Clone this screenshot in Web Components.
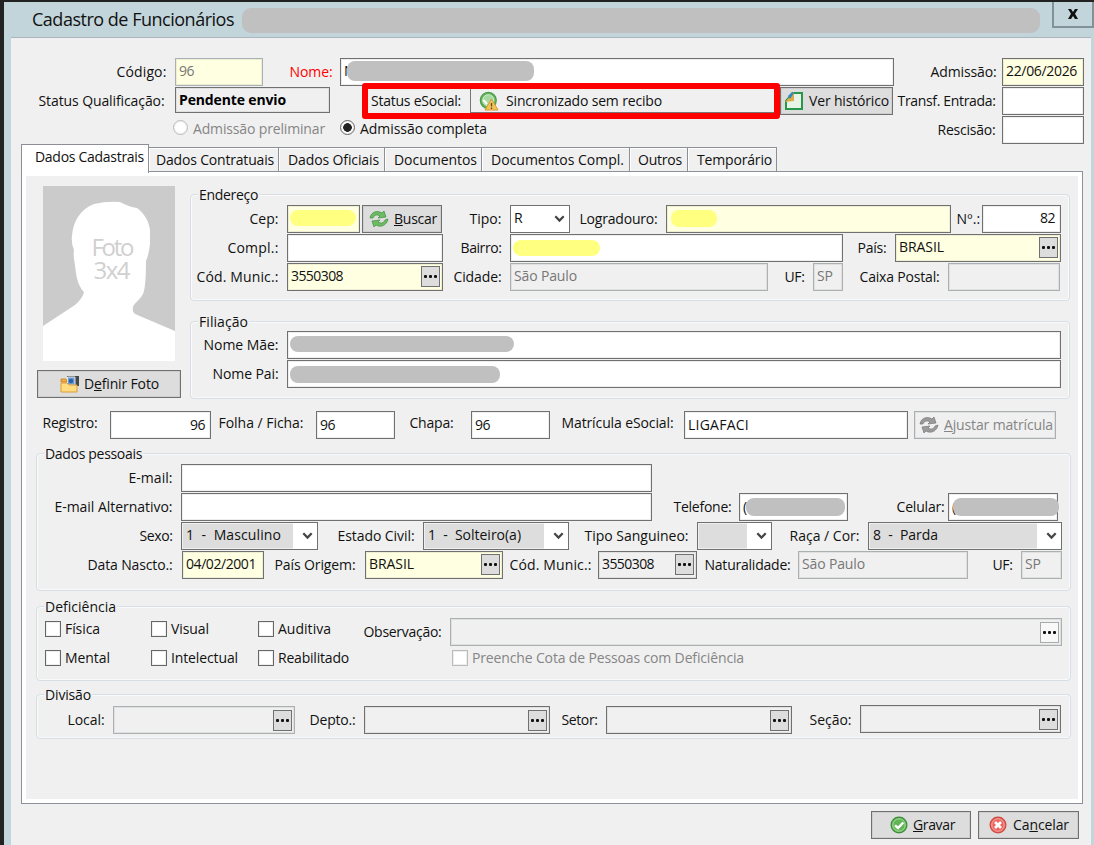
<!DOCTYPE html>
<html lang="pt-BR">
<head>
<meta charset="utf-8">
<title>Cadastro de Funcionários</title>
<style>
  body {
    margin: 0;
    width: 1094px;
    height: 845px;
    overflow: hidden;
    background: #222;
    color: #111;
    font: 14px/20px "Open Sans", "Noto Sans", sans-serif;
  }
</style>
</head>
<body>
<employee-form></employee-form>

<script>
const ICONS = {
    sync: `<svg viewBox="0 0 20 20"><g stroke="var(--edge)" stroke-width=".7" fill="var(--fill)"><path d="M1 9C2 3 8 1 13 4L15 2 17 8 9 9 11 7C8 5 5 6 4 9Z"/><path d="M19 10C18 16 12 19 7 16L5 18 3 12 11 11 9 13C12 15 15 14 16 11Z"/></g></svg>`,
    ok: `<svg viewBox="0 0 20 20"><circle cx="10" cy="10" r="7.9" fill="#62b557" stroke="#398b39" stroke-width="1.2"/><circle cx="10" cy="10" r="6.2" fill="none" stroke="#a6dd9b"/><path d="M6 10.3 9 13 14.3 7.5" fill="none" stroke="#fff" stroke-width="2.4"/></svg>`,
    cancel: `<svg viewBox="0 0 20 20"><circle cx="10" cy="10" r="7.9" fill="#e9655d" stroke="#cc4a43" stroke-width="1.2"/><circle cx="10" cy="10" r="6.2" fill="none" stroke="#f7aaa4"/><path d="M7 7 13 13M13 7 7 13" stroke="#fff" stroke-width="2.8"/></svg>`,
    warn: `<svg viewBox="0 0 20 20"><circle cx="9.3" cy="9.3" r="8" fill="#65b65d" stroke="#4c9c49" stroke-width="1.2"/><circle cx="9.3" cy="9.3" r="5.6" fill="#a8d9a2" stroke="#d5efd1"/><path d="M4.5 9 8 13" stroke="#fff" stroke-width="2"/><path d="M12.5 8 19 19H6Z" fill="#f3c45b" stroke="#d79b35"/><path d="M12.5 12V15.4M12.5 16.5V18" stroke="#664717" stroke-width="1.3"/></svg>`,
    page: `<svg viewBox="0 0 20 20"><path d="M9 2H18V18H2V10Z" fill="#e9f4e9" stroke="#279749" stroke-width="2"/><path d="M1 11 10 1V10Z" fill="#e0ab46"/><path d="M4 5 8 1 10 2 6 8Z" fill="#3389bd"/></svg>`,
    photo: `<svg viewBox="0 0 20 20"><path d="M7 2H19V12H7Z" fill="#45484b"/><path d="M7.5 3H15V11H7.5Z" fill="#6f9ed4" stroke="#e6e6e6"/><circle cx="11" cy="7" r="2.3" fill="#2864a8"/><path d="M1 5H6L7 8H1Z" fill="#edac48" stroke="#ce8a2b"/><path d="M1 9H7L9 11H17V18H1Z" fill="#ffdc80" stroke="#dc9d39"/></svg>`
};

// Text set to a given width through its letter spacing
class FitText extends HTMLElement {
    connectedCallback() {
        this.attachShadow({ mode: 'open' }).innerHTML =
            '<style>:host { display: inline-block; white-space: pre; font-stretch: 90%; }</style><slot></slot>';
        const width = Number(this.getAttribute('width'));
        if (!width) return;
        const count = this.textContent.length;
        const natural = this.getBoundingClientRect().width;
        this.style.letterSpacing = `${(width - natural) / count}px`;
    }
}
customElements.define('fit-text', FitText);

class AppIcon extends HTMLElement {
    connectedCallback() {
        this.attachShadow({ mode: 'open' }).innerHTML = `
          <style>
            :host { display: block; flex: none; width: 20px; height: 20px; --fill: #6dbb63; --edge: #3f8e3f; }
            :host([muted]) { --fill: #9b9b9b; --edge: #777; }
            svg { display: block; }
          </style>
          ${ICONS[this.getAttribute('name')]}
        `;
    }
}
customElements.define('app-icon', AppIcon);

// Label and input box. "span" runs from the previous item to the box.
class FormField extends HTMLElement {
    attr(name, fallback = '') {
        return this.getAttribute(name) ?? fallback;
    }

    connectedCallback() {
        const bar = this.attr('bar').split(' ');
        this.attachShadow({ mode: 'open' }).innerHTML = `
          <style>
            :host { display: flex; flex: none; }
            .label {
              box-sizing: border-box;
              width: ${this.attr('span', 0)}px;
              padding: ${this.attr('drop', 4)}px ${this.attr('gap', 9) - 0.5}px 0 0;
              display: flex;
              justify-content: flex-end;
              white-space: nowrap;
              color: ${this.attr('ink', 'inherit')};
            }
            .box {
              box-sizing: border-box;
              width: ${this.attr('width')}px;
              height: ${this.attr('height', 28)}px;
              padding: ${this.attr('rise', 3)}px 4px 0 3px;
              border: 1px solid #707070;
              box-shadow: inset 0 0 0 1px #0001;
              background: #fff;
              display: flex;
              position: relative;
            }
            :host([tone=cream]) .box, :host([tone=locked]) .box { background: #ffffe1; }
            :host([tone=gray]) .box, :host([tone=off]) .box { background: #f0f0f0; }
            :host([tone=off]) .box, :host([tone=locked]) .box { border-color: #abb0b3; color: #777; }
            :host([end]) .box { justify-content: flex-end; padding-right: 5px; }
            :host([bold]) .box { font-weight: bold; color: #000; }
            :host([combo]) .box { background: linear-gradient(90deg, #ddd calc(100% - 24px), #fff 0); box-shadow: inset 0 0 0 1px #fff8; padding-left: 4px; }
            :host([combo=plain]) .box { background: #fff; padding-left: 3px; }
            .more {
              box-sizing: border-box;
              width: 19px;
              height: 21px;
              margin: 0 -2px 0 auto;
              border: 1px solid #707070;
              background: #ddd;
              display: flex;
              align-items: center;
              justify-content: center;
              gap: 2px;
            }
            :host([more=light]) .more { background: #f8f8f8; border-color: #aaa; }
            .more i { width: 3px; height: 3px; background: #111; border-radius: 1px; }
            .arrow { width: 11px; height: 8px; margin: 7px 0 0 auto; }
            .bar {
              position: absolute;
              left: ${bar[0]}px;
              width: ${bar[1]}px;
              top: ${bar[2]}px;
              height: ${bar[3]}px;
              border-radius: 8px;
              background: ${bar[4] || '#c0c0c0'};
            }
          </style>
          <div class="label"><fit-text width="${this.attr('fit')}">${this.attr('label')}</fit-text></div>
          <div class="box">
            ${this.hasAttribute('value') ? `<fit-text width="${this.attr('vfit')}">${this.attr('value')}</fit-text>` : ''}
            ${this.hasAttribute('more') ? '<div class="more"><i></i><i></i><i></i></div>' : ''}
            ${this.hasAttribute('combo') ? '<svg class="arrow" viewBox="0 0 11 8"><path d="M1.3 1.2 5.5 5.6 9.7 1.2" fill="none" stroke="#444" stroke-width="2.2"/></svg>' : ''}
            ${this.hasAttribute('bar') ? '<div class="bar"></div>' : ''}
          </div>
        `;
    }
}
customElements.define('form-field', FormField);

class PushButton extends HTMLElement {
    connectedCallback() {
        const muted = this.hasAttribute('off') ? 'muted' : '';
        this.attachShadow({ mode: 'open' }).innerHTML = `
          <style>
            :host {
              box-sizing: border-box;
              display: flex;
              flex: none;
              align-items: center;
              gap: ${this.getAttribute('gap') || 5}px;
              width: ${this.getAttribute('width')}px;
              height: 28px;
              padding-left: ${this.getAttribute('pad')}px;
              border: 1px solid #707070;
              box-shadow: inset 0 0 0 1px #0001;
              background: #ddd;
              white-space: nowrap;
            }
            :host([off]) { background: #f0f0f0; border-color: #aaafb2; color: #858585; }
          </style>
          <app-icon name="${this.getAttribute('icon')}" ${muted}></app-icon>
          <slot></slot>
        `;
    }
}
customElements.define('push-button', PushButton);

class CheckOption extends HTMLElement {
    connectedCallback() {
        this.attachShadow({ mode: 'open' }).innerHTML = `
          <style>
            :host { display: flex; flex: none; align-items: center; height: 22px; white-space: nowrap; }
            i { box-sizing: border-box; width: 16px; height: 16px; margin-right: 4px; border: 1px solid #666; box-shadow: inset 0 0 0 1px #0001; background: #fff; }
            :host([off]) { color: #858585; }
            :host([off]) i { border-color: #bbb; }
            :host([radio]) i { width: 15px; height: 15px; margin-right: 5px; border-radius: 50%; }
            :host([radio]) slot { display: block; padding-top: 3px; }
            :host([on]) i { background: radial-gradient(circle, #222 0 4px, #fff 4.6px); }
          </style>
          <i></i><slot></slot>
        `;
    }
}
customElements.define('check-option', CheckOption);

class GroupBox extends HTMLElement {
    connectedCallback() {
        this.attachShadow({ mode: 'open' }).innerHTML = `
          <style>
            :host {
              box-sizing: border-box;
              display: flex;
              flex-direction: column;
              flex: none;
              height: ${this.getAttribute('height')}px;
              border: 1px solid #d5dfe5;
              border-radius: 4px;
              box-shadow: inset 0 0 0 1px #fafafa;
            }
            .legend { align-self: flex-start; height: 18px; line-height: 20px; margin: -10px 0 0 7px; background: #f0f0f0; padding: 0 1px; }
            .rows { display: flex; flex-direction: column; gap: 1px; padding-top: ${this.getAttribute('pad') || 2}px; }
          </style>
          <div class="legend"><fit-text width="${this.getAttribute('fit')}">${this.getAttribute('legend')}</fit-text></div>
          <div class="rows"><slot></slot></div>
        `;
    }
}
customElements.define('group-box', GroupBox);

class PhotoBox extends HTMLElement {
    connectedCallback() {
        this.attachShadow({ mode: 'open' }).innerHTML = `
          <style>
            :host { display: block; width: 132px; height: 175px; background: #cbcbcb; }
            svg { display: block; }
            text { fill: #d0d0d0; font-size: 24px; text-anchor: middle; }
          </style>
          <svg width="132" height="175" viewBox="0 0 132 175">
            <path fill="#fff" d="M0 140 32 119Q40 112 41 106C34 99 33 88 32 79Q30 70 31 64 28 57 29 50C30 36 37 23 51 18Q64 15 77 16 86 21 94 22C102 28 106 36 107 44V58Q106 68 103 75 103 101 100 108C97 114 91 117 90 121Q89 126 92 128L132 145V175H0Z"/>
            <text x="70" y="70" textLength="43">Foto</text>
            <text x="69" y="93" textLength="37">3x4</text>
          </svg>
        `;
    }
}
customElements.define('photo-box', PhotoBox);

class TabStrip extends HTMLElement {
    connectedCallback() {
        // title, tab width, text width, left padding
        const tabs = [
            ['Dados Cadastrais', 128, 109, 13],
            ['Dados Contratuais', 130, 118, 7],
            ['Dados Oficiais', 106, 91, 9],
            ['Documentos', 97, 83, 9],
            ['Documentos Compl.', 148, 133, 9],
            ['Outros', 58, 44, 8],
            ['Temporário', 89, 75, 9]
        ];
        this.attachShadow({ mode: 'open' }).innerHTML = `
          <style>
            :host { display: flex; align-items: flex-start; height: 26px; }
            div {
              box-sizing: border-box;
              flex: none;
              height: 25px;
              margin-top: 2px;
              padding-top: 2px;
              border: 1px solid #8c8f98;
              border-left-width: 0;
              box-shadow: inset 1px 1px #fff;
            }
            div:first-of-type {
              height: 29px;
              margin-top: -1px;
              border-left-width: 1px;
              border-bottom: 0;
              background: #fff;
              position: relative;
            }
          </style>
          ${tabs.map(([title, width, fit, pad]) => `
            <div style="width: ${width}px; padding-left: ${pad}px"><fit-text width="${fit}">${title}</fit-text></div>
          `).join('')}
        `;
    }
}
customElements.define('tab-strip', TabStrip);

class EmployeeForm extends HTMLElement {
    connectedCallback() {
        this.attachShadow({ mode: 'open' }).innerHTML = `
          <style>
            :host { display: flex; flex-direction: column; box-sizing: border-box; height: 845px; margin-left: 4px; padding: 2px 3px 0 7px; background: #c2d5db; border-top: 0; box-shadow: inset 0 2px #222; }
            .title { display: flex; height: 35px; flex: none; }
            .title fit-text { margin: 4px 8px 0 21px; font-size: 18px; line-height: 26px; }
            .title .name { width: 798px; height: 25px; margin-top: 6px; border-radius: 9px; background: #c0c0c0; }
            .title .close { box-sizing: border-box; width: 42px; height: 26px; margin: 0 -3px 0 12px; border: 2px solid #83929a; border-top: 0; display: flex; align-items: center; justify-content: center; }
            main { flex: 1; display: flex; flex-direction: column; border-top: 1px solid #a9b6c0; background: #f0f0f0; }
            .row { display: flex; align-items: flex-start; flex: none; height: 28px; }
            .head { display: flex; flex-direction: column; gap: 1px; padding-top: 20px; height: 87px; }
            .status { box-sizing: border-box; width: 418px; height: 36px; margin: -4px 0 0 32px; border: 6px solid #f00; border-radius: 3px; display: flex; align-items: flex-start; position: relative; }
            .status .label { margin: 1px 8px 0 3px; width: 91px; padding-top: 1px; height: 20px; }
            .status .value { box-sizing: border-box; width: 304px; height: 24px; border: 1px solid #777; border-width: 0 0 1px 1px; display: flex; align-items: center; gap: 7px; padding-left: 8px; }
            .tabs { margin-left: 10px; }
            .panel { box-sizing: border-box; width: 1062px; height: 633px; margin-left: 10px; border: 1px solid #8c919c; box-shadow: inset 0 0 0 4px #fff; padding: 4px; flex: none; }
            .top { display: flex; }
            .photo { width: 164px; padding: 10px 0 0 11px; box-sizing: border-box; }
            .photo photo-box { margin: 0 0 9px 6px; }
            .groups { width: 880px; padding-top: 18px; display: flex; flex-direction: column; gap: 20px; }
            .record { padding-top: 12px; }
            .wide { width: 1035px; margin-left: 10px; }
            .actions { display: flex; gap: 7px; padding: 7px 0 0 860px; }
          </style>

          <div class="title">
            <fit-text width="202">Cadastro de Funcionários</fit-text>
            <div class="name"></div>
            <div class="close"><svg width="12" height="12" viewBox="0 0 12 12"><path d="M1 1H4L6 4 8 1H11L8 5.8 11 11H8L6 8 4 11H1L4 5.8Z" fill="#111"/></svg></div>
          </div>
          <main>
            <div class="head">
              <div class="row">
                <form-field label="Código:" fit="50" span="164" width="88" tone="locked" value="96" vfit="15" rise="2"></form-field>
                <form-field label="Nome:" fit="43" span="77" gap="8" ink="#f00" width="554" rise="2" value="N" bar="6 187 2 20"></form-field>
                <form-field label="Admissão:" fit="66" span="108" gap="6" width="82" tone="cream" rise="2" value="22/06/2026" vfit="71"></form-field>
              </div>
              <div class="row">
                <form-field label="Status Qualificação:" fit="126" span="164" gap="11" width="155" height="26" rise="2" tone="gray" bold value="Pendente envio" vfit="107"></form-field>
                <div class="status">
                  <div class="label"><fit-text width="90">Status eSocial:</fit-text></div>
                  <div class="value"><app-icon name="warn"></app-icon><fit-text width="156">Sincronizado sem recibo</fit-text></div>
                </div>
                <push-button icon="page" width="113" pad="3"><fit-text width="80">Ver histórico</fit-text></push-button>
                <form-field label="Transf. Entrada:" fit="98" span="109" gap="7" width="82"></form-field>
              </div>
              <div class="row">
                <check-option radio off style="margin-left: 162px; width: 167px"><fit-text width="132">Admissão preliminar</fit-text></check-option>
                <check-option radio on style="width: 147px"><fit-text width="127">Admissão completa</fit-text></check-option>
                <form-field label="Rescisão:" fit="58" span="515" gap="7" width="82"></form-field>
              </div>
            </div>
            <tab-strip class="tabs"></tab-strip>
            <div class="panel">
              <div class="top">
                <div class="photo">
                  <photo-box></photo-box>
                  <push-button icon="photo" width="144" pad="22" gap="4"><fit-text width="75">D<u>e</u>finir Foto</fit-text></push-button>
                </div>
                <div class="groups">
                  <group-box legend="Endereço" fit="59" height="107">
                    <div class="row">
                      <form-field label="Cep:" fit="29" span="96" width="73" tone="cream" bar="2 66 4 16 #ffff80"></form-field>
                      <push-button icon="sync" width="80" pad="6" gap="5" style="margin-left: 2px"><fit-text width="43"><u>B</u>uscar</fit-text></push-button>
                      <form-field label="Tipo:" fit="32" span="68" width="60" combo="plain" rise="2" value="R" vfit="9"></form-field>
                      <form-field label="Logradouro:" fit="78" span="96" width="285" tone="cream" bar="4 46 4 17 #ffff80"></form-field>
                      <form-field label="Nº.:" fit="24" span="31" gap="2" width="79" end rise="2" value="82" vfit="15"></form-field>
                    </div>
                    <div class="row">
                      <form-field label="Compl.:" fit="51" span="96" width="156"></form-field>
                      <form-field label="Bairro:" fit="41" span="67" width="333" bar="2 87 5 16 #ffff80"></form-field>
                      <form-field label="País:" fit="29" span="52" width="166" tone="cream" more rise="2" value="BRASIL" vfit="45"></form-field>
                    </div>
                    <div class="row">
                      <form-field label="Cód. Munic.:" fit="82" span="96" width="156" tone="cream" more value="3550308" vfit="52" rise="2"></form-field>
                      <form-field label="Cidade:" fit="48" span="67" width="258" tone="off" value="São Paulo" vfit="63" rise="2"></form-field>
                      <form-field label="UF:" fit="20" span="45" width="30" tone="off" value="SP" vfit="16" rise="2"></form-field>
                      <form-field label="Caixa Postal:" fit="80" span="105" width="112" tone="off"></form-field>
                    </div>
                  </group-box>
                  <group-box legend="Filiação" fit="49" height="78" pad="1">
                    <div class="row"><form-field label="Nome Mãe:" fit="75" span="96" width="774" bar="2 224 4 16"></form-field></div>
                    <div class="row"><form-field label="Nome Pai:" fit="66" span="96" width="774" bar="2 210 5 17"></form-field></div>
                  </group-box>
                </div>
              </div>

              <div class="row record">
                <form-field label="Registro:" fit="55" span="84" gap="13" drop="2" width="101" end value="96" vfit="15"></form-field>
                <form-field label="Folha / Ficha:" fit="85" span="105" gap="13" drop="2" width="79" value="96" vfit="15"></form-field>
                <form-field label="Chapa:" fit="44" span="76" gap="18" drop="2" width="79" value="96" vfit="15"></form-field>
                <form-field label="Matrícula eSocial:" fit="112" span="134" gap="11" drop="2" width="224" value="LIGAFACI" vfit="61"></form-field>
                <push-button icon="sync" off width="142" pad="4" style="margin-left: 6px"><fit-text width="109"><u>A</u>justar matrícula</fit-text></push-button>
              </div>

              <group-box class="wide" legend="Dados pessoais" fit="97" height="138" style="margin-top: 14px">
                <div class="row"><form-field label="E-mail:" fit="44" span="144" width="471"></form-field></div>
                <div class="row">
                  <form-field label="E-mail Alternativo:" fit="118" span="144" width="471"></form-field>
                  <form-field label="Telefone:" fit="58" span="87" gap="8" width="109" value="(" bar="6 99 4 18"></form-field>
                  <form-field label="Celular:" fit="48" span="100" gap="4" width="110" value="(" bar="4 106 4 18"></form-field>
                </div>
                <div class="row">
                  <form-field label="Sexo:" fit="33" span="144" width="137" combo rise="2" value="1  -  Masculino" vfit="95"></form-field>
                  <form-field label="Estado Civil:" fit="77" span="105" width="146" combo rise="2" value="1  -  Solteiro(a)" vfit="93"></form-field>
                  <form-field label="Tipo Sanguineo:" fit="104" span="128" width="75" combo rise="2"></form-field>
                  <form-field label="Raça / Cor:" fit="70" span="96" width="194" combo rise="2" value="8  -  Parda" vfit="65"></form-field>
                </div>
                <div class="row">
                  <form-field label="Data Nascto.:" fit="85" span="145" gap="10" width="82" tone="cream" rise="2" value="04/02/2001" vfit="70"></form-field>
                  <form-field label="País Origem:" fit="81" span="101" gap="10" width="138" tone="cream" more rise="2" value="BRASIL" vfit="45"></form-field>
                  <form-field label="Cód. Munic.:" fit="82" span="95" gap="7" width="99" tone="gray" more rise="2" value="3550308" vfit="52"></form-field>
                  <form-field label="Naturalidade:" fit="86" span="101" gap="8" width="170" tone="off" rise="2" value="São Paulo" vfit="63"></form-field>
                  <form-field label="UF:" fit="20" span="53" width="41" tone="off" rise="2" value="SP" vfit="16"></form-field>
                </div>
              </group-box>

              <group-box class="wide" legend="Deficiência" fit="71" height="75" pad="3" style="margin-top: 15px">
                <div class="row">
                  <check-option style="margin-left: 8px; width: 106px"><fit-text width="35">Física</fit-text></check-option>
                  <check-option style="width: 107px"><fit-text width="38">Visual</fit-text></check-option>
                  <check-option style="width: 106px"><fit-text width="53">Auditiva</fit-text></check-option>
                  <form-field label="Observação:" fit="78" span="86" width="612" tone="off" more="light"></form-field>
                </div>
                <div class="row">
                  <check-option style="margin-left: 8px; width: 106px"><fit-text width="45">Mental</fit-text></check-option>
                  <check-option style="width: 107px"><fit-text width="67">Intelectual</fit-text></check-option>
                  <check-option style="width: 106px"><fit-text width="71">Reabilitado</fit-text></check-option>
                  <check-option off style="margin-left: 88px"><fit-text width="272">Preenche Cota de Pessoas com Deficiência</fit-text></check-option>
                </div>
              </group-box>

              <group-box class="wide" legend="Divisão" fit="46" height="45" pad="3" style="margin-top: 13px">
                <div class="row">
                  <form-field label="Local:" fit="37" span="76" width="182" tone="off" more></form-field>
                  <form-field label="Depto.:" fit="46" span="69" width="186" tone="gray" more></form-field>
                  <form-field label="Setor:" fit="36" span="56" width="186" tone="gray" more></form-field>
                  <form-field label="Seção:" fit="42" span="68" width="201" tone="gray" more style="margin-top: -1px" drop="5"></form-field>
                </div>
              </group-box>
            </div>
            <div class="actions">
              <push-button icon="ok" width="100" pad="17" gap="4"><fit-text width="42"><u>G</u>ravar</fit-text></push-button>
              <push-button icon="cancel" width="101" pad="9" gap="5"><fit-text width="56">Ca<u>n</u>celar</fit-text></push-button>
            </div>
          </main>
        `;
    }
}
customElements.define('employee-form', EmployeeForm);
</script>
</body>
</html>
